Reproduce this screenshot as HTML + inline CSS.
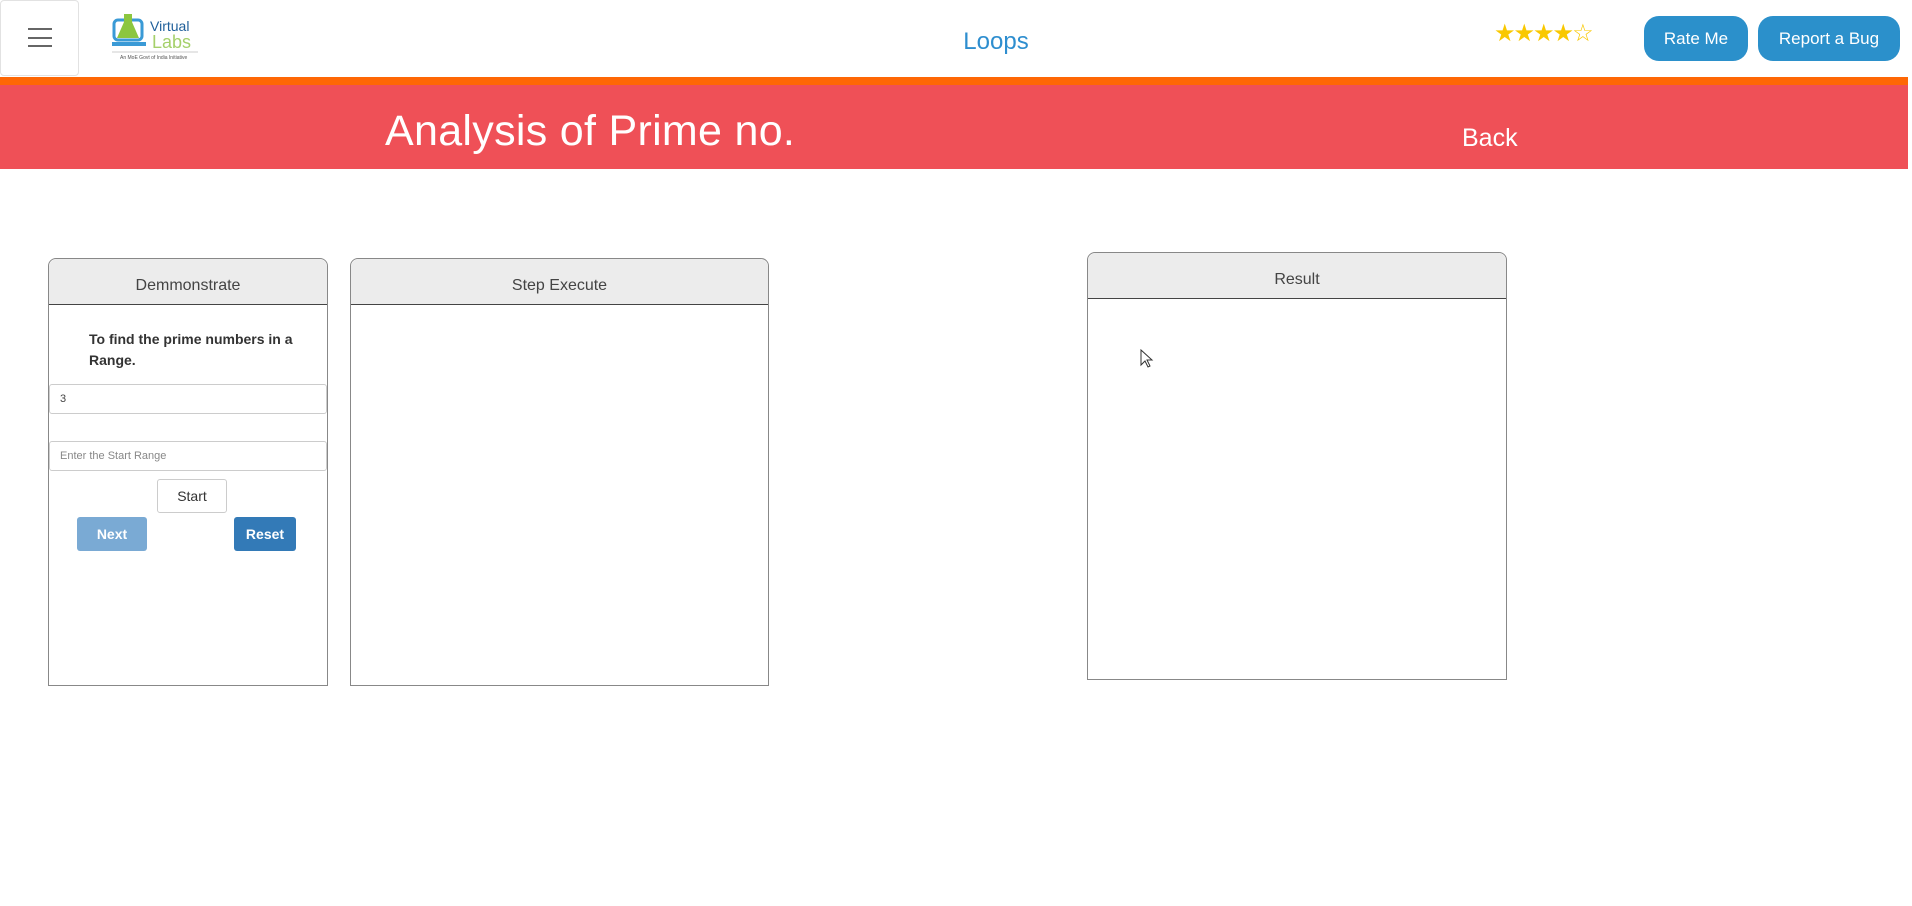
<!DOCTYPE html>
<html><head><meta charset="utf-8"><style>
*{box-sizing:border-box;margin:0;padding:0}
body{width:1912px;height:906px;background:#fff;font-family:"Liberation Sans",sans-serif;position:relative;overflow:hidden}
.a{position:absolute}
.btn{position:absolute;background:#2b90cb;color:#fff;border-radius:15px;font-size:17px;text-align:center;line-height:45px}
.panel{position:absolute;border:1px solid #888;border-radius:8px 8px 0 0;background:#fff}
.ph{height:46px;background:#ececec;border-bottom:1.5px solid #444;border-radius:8px 8px 0 0;text-align:center;font-size:16px;color:#444;line-height:54px}
.inp{position:absolute;left:0;width:278px;height:30px;border:1px solid #ccc;border-radius:3px;font-size:11px;padding-left:10px;line-height:28px}
</style></head><body>
<div class="a" style="left:0;top:0;width:79px;height:76px;border:1px solid #e2e2e2;border-radius:4px"></div>
<div class="a" style="left:28px;top:28px;width:24px;height:2px;background:#666"></div>
<div class="a" style="left:28px;top:37px;width:24px;height:2px;background:#666"></div>
<div class="a" style="left:28px;top:45px;width:24px;height:2px;background:#666"></div>
<svg class="a" style="left:110px;top:12px" width="90" height="50">
<rect x="4" y="8" width="28" height="20" rx="4" fill="none" stroke="#3a9ad6" stroke-width="3"/>
<rect x="2" y="30" width="34" height="4" fill="#3a9ad6"/>
<path d="M14 2h8v8l7 16h-22l7-16z" fill="#8cc63f"/>
<text x="40" y="19" font-size="14" fill="#1f5f9a" font-family="Liberation Sans">Virtual</text>
<text x="42" y="36" font-size="18" fill="#a5d06a" font-family="Liberation Sans">Labs</text>
<line x1="2" y1="40" x2="88" y2="40" stroke="#ccc"/>
<text x="10" y="47" font-size="5" fill="#555">An MoE Govt of India Initiative</text>
</svg>
<div class="a" style="left:0;width:1912px;top:28px;text-align:center;font-size:24px;color:#2e8ecf;padding-left:80px">Loops</div>
<div class="a" style="left:1494px;top:19px;font-size:24px;color:#f9c800;letter-spacing:-2px">★★★★<span style="color:#f9c800">☆</span></div>
<div class="btn" style="left:1644px;top:16px;width:104px">Rate Me</div>
<div class="btn" style="left:1758px;top:16px;width:142px">Report a Bug</div>
<div class="a" style="left:0;top:77px;width:1908px;height:8px;background:#fe6705"></div>
<div class="a" style="left:0;top:85px;width:1908px;height:84px;background:#ef5057"></div>
<div class="a" style="left:385px;top:107px;font-size:43px;color:#fff;letter-spacing:0.3px">Analysis of Prime no.</div>
<div class="a" style="left:1462px;top:124px;font-size:25px;color:#fff">Back</div>

<div class="panel" style="left:48px;top:258px;width:280px;height:428px">
<div class="ph">Demmonstrate</div>
<div class="a" style="left:40px;top:70px;width:220px;font-size:14px;font-weight:bold;color:#333;line-height:21px">To find the prime numbers in a Range.</div>
<div class="inp" style="top:125px;color:#444">3</div>
<div class="inp" style="top:182px;color:#888">Enter the Start Range</div>
<div class="a" style="left:108px;top:220px;width:70px;height:34px;border:1px solid #ccc;border-radius:3px;text-align:center;line-height:32px;font-size:14px;color:#333">Start</div>
<div class="a" style="left:28px;top:258px;width:70px;height:34px;background:#7aaad4;border-radius:3px;text-align:center;line-height:34px;font-size:14px;font-weight:bold;color:#fff">Next</div>
<div class="a" style="left:185px;top:258px;width:62px;height:34px;background:#337ab7;border-radius:3px;text-align:center;line-height:34px;font-size:14px;font-weight:bold;color:#fff">Reset</div>
</div>
<div class="panel" style="left:350px;top:258px;width:419px;height:428px"><div class="ph">Step Execute</div></div>
<div class="panel" style="left:1087px;top:252px;width:420px;height:428px"><div class="ph">Result</div></div>
<svg class="a" style="left:1140px;top:349px" width="14" height="20"><path d="M1 1v15l4-4 3 6 2-1-3-6h5z" fill="#fff" stroke="#333"/></svg>
</body></html>
